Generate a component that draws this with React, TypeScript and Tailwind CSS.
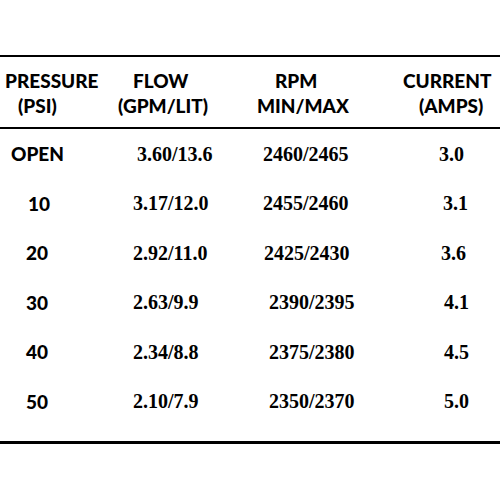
const rows = [
  { p: 'OPEN', pc: 'pl-[11px]', f: '3.60/13.6', fc: 'pl-[27px]', r: '2460/2465', rc: 'pl-[13px]', a: '3.0', ac: 'pl-[49px]' },
  { p: '10', pc: 'pl-[28px]', f: '3.17/12.0', fc: 'pl-[23px]', r: '2455/2460', rc: 'pl-[13px]', a: '3.1', ac: 'pl-[53px]' },
  { p: '20', pc: 'pl-[26px]', f: '2.92/11.0', fc: 'pl-[23px]', r: '2425/2430', rc: 'pl-[14px]', a: '3.6', ac: 'pl-[51px]' },
  { p: '30', pc: 'pl-[26px]', f: '2.63/9.9', fc: 'pl-[23px]', r: '2390/2395', rc: 'pl-[19px]', a: '4.1', ac: 'pl-[54px]' },
  { p: '40', pc: 'pl-[26px]', f: '2.34/8.8', fc: 'pl-[23px]', r: '2375/2380', rc: 'pl-[19px]', a: '4.5', ac: 'pl-[54px]' },
  { p: '50', pc: 'pl-[26px]', f: '2.10/7.9', fc: 'pl-[23px]', r: '2350/2370', rc: 'pl-[19px]', a: '5.0', ac: 'pl-[54px]' },
];

const sans = "font-['Lato',sans-serif] font-black text-[19px] leading-[25px]";
const serif = "font-['Liberation_Serif',serif] font-bold text-[20px]";

export default function App() {
  return (
    <div className="w-[500px] h-[500px] bg-white text-black pt-[55px]">
      <div className="border-t-2 border-black" />

      <div className={`flex pt-[11px] pb-[9px] ${sans}`}>
        <div className="w-[110px] flex flex-col">
          <span className="pl-[5px]">PRESSURE</span>
          <span className="pl-[18px]">(PSI)</span>
        </div>
        <div className="w-[140px] flex flex-col">
          <span className="pl-[23px]">FLOW</span>
          <span className="pl-[8px]">(GPM/LIT)</span>
        </div>
        <div className="w-[140px] flex flex-col">
          <span className="pl-[25px]">RPM</span>
          <span className="pl-[7px]">MIN/MAX</span>
        </div>
        <div className="flex-1 flex flex-col">
          <span className="pl-[13px]">CURRENT</span>
          <span className="pl-[29px]">(AMPS)</span>
        </div>
      </div>

      <div className="border-t-2 border-black" />

      <div className="pb-[15px]">
        {rows.map((row) => (
          <div key={row.p} className="flex items-center h-[49.5px]">
            <div className={`w-[110px] ${row.pc} ${sans}`}>{row.p}</div>
            <div className={`w-[140px] ${row.fc} ${serif}`}>{row.f}</div>
            <div className={`w-[140px] ${row.rc} ${serif}`}>{row.r}</div>
            <div className={`flex-1 ${row.ac} ${serif}`}>{row.a}</div>
          </div>
        ))}
      </div>

      <div className="border-t-[3px] border-black" />
    </div>
  );
}
